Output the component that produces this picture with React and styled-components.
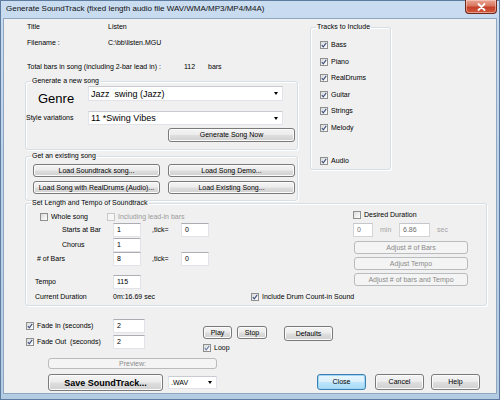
import React from "react";
import styled, { createGlobalStyle, css } from "styled-components";

const GlobalStyle = createGlobalStyle`
  html, body { margin: 0; padding: 0; background: #ffffff; }
  body { font-family: "Liberation Sans", Arial, sans-serif; }
  * { box-sizing: border-box; }
`;

const Window = styled.div`
  width: 500px;
  height: 400px;
  display: flex;
  flex-direction: column;
  background: linear-gradient(180deg, #c9dcf0 0%, #bcd2ea 40%, #b4cbe4 100%);
  border: 1px solid #5d7c9f;
  font-family: "Liberation Sans", Arial, sans-serif;
  color: #000;
`;

const TitleBar = styled.div`
  height: 17px;
  flex: none;
  display: flex;
  align-items: flex-start;
  justify-content: space-between;
  padding-left: 5px;
`;

const TitleText = styled.div`
  font-size: 8px;
  line-height: 15px;
  color: #111;
`;

const CloseBtn = styled.div`
  width: 32px;
  height: 14px;
  margin-right: 2px;
  margin-top: -1px;
  border: 1px solid #6e2a1f;
  border-top: none;
  border-radius: 0 0 4px 4px;
  background: linear-gradient(180deg, #e9a593 0%, #d9765f 45%, #c4412a 55%, #d35a3c 100%);
  display: flex;
  align-items: center;
  justify-content: center;
  box-shadow: inset 0 0 0 1px rgba(255, 220, 210, 0.5);
`;

const Client = styled.div`
  flex: 1;
  margin: 0 2px 5px 2px;
  background: #f0f0f0;
  border: 1px solid #8fa7c0;
  padding-left: 21px;
  display: flex;
  flex-direction: column;
  font-size: 7px;
  line-height: 8px;
`;

const TopArea = styled.div`
  display: flex;
  align-items: flex-start;
`;

const LeftCol = styled.div`
  width: 273px;
  flex: none;
  display: flex;
  flex-direction: column;
`;

const InfoRow = styled.div`
  display: flex;
  height: 12px;
  line-height: 12px;
  padding-left: 2px;
  margin-top: ${(p) => p.$mt || 0}px;
`;

const InfoLabel = styled.span`
  width: ${(p) => p.$w}px;
  flex: none;
`;

const Group = styled.fieldset`
  margin: ${(p) => p.$mt || 0}px 0 0 0;
  padding: ${(p) => p.$pt || 0}px 0 ${(p) => p.$pb || 0}px 0;
  border: 1px solid #d5dfe5;
  border-radius: 3px;
  box-shadow: inset 1px 1px 0 #fff, 1px 1px 0 #fff;
  min-width: 0;
  width: ${(p) => p.$w}px;
  flex: none;
`;

const Legend = styled.legend`
  font-size: 7px;
  line-height: 8px;
  padding: 0 1px;
  margin-left: 5px;
`;

const Row = styled.div`
  display: flex;
  align-items: ${(p) => p.$align || "center"};
  height: ${(p) => p.$h}px;
  margin-top: ${(p) => p.$mt || 0}px;
  margin-left: ${(p) => p.$ml || 0}px;
  gap: ${(p) => p.$gap || 0}px;
`;

const LabelCell = styled.span`
  width: ${(p) => p.$w}px;
  padding-left: ${(p) => p.$pl || 0}px;
  flex: none;
  white-space: nowrap;
  color: ${(p) => (p.$muted ? "#9a9a9a" : "#000")};
`;

const GenreLabel = styled.span`
  width: 62px;
  flex: none;
  padding-left: 12px;
  font-size: 13px;
  line-height: 15px;
  padding-top: 5px;
  align-self: flex-start;
`;

const ComboBox = styled.div`
  width: ${(p) => p.$w}px;
  height: ${(p) => p.$h}px;
  flex: none;
  background: #fff;
  border: 1px solid #e2e3ea;
  border-top-color: #c9cbd3;
  display: flex;
  align-items: center;
  justify-content: space-between;
  padding: 0 4px 0 2px;
  font-size: ${(p) => p.$fs || 9}px;
  white-space: pre;
`;

const Arrow = styled.span`
  width: 0;
  height: 0;
  border-left: 2.5px solid transparent;
  border-right: 2.5px solid transparent;
  border-top: 3px solid #000;
  flex: none;
`;

const buttonBase = css`
  flex: none;
  display: flex;
  align-items: center;
  justify-content: center;
  border-radius: 3px;
  white-space: nowrap;
  font-family: "Liberation Sans", Arial, sans-serif;
`;

const Button = styled.div`
  ${buttonBase};
  width: ${(p) => p.$w}px;
  height: ${(p) => p.$h || 13}px;
  margin-top: ${(p) => p.$mt || 0}px;
  margin-left: ${(p) => p.$ml || 0}px;
  font-size: ${(p) => p.$fs || 7}px;
  font-weight: ${(p) => (p.$bold ? 700 : 400)};
  ${(p) =>
    p.$disabled
      ? css`
          background: #f4f4f4;
          border: 1px solid #b8bcbf;
          color: #8a8a8a;
        `
      : p.$focused
      ? css`
          background: linear-gradient(180deg, #eaf6fd 0%, #d9f0fc 48%, #bee6fd 52%, #a7d9f5 100%);
          border: 1px solid #3c7fb1;
          box-shadow: inset 0 0 0 1px #9fd6f5;
          color: #000;
        `
      : css`
          background: linear-gradient(180deg, #f4f4f4 0%, #ececec 48%, #dedede 52%, #d0d0d0 100%);
          border: 1px solid #7a7a7a;
          box-shadow: inset 0 0 0 1px #fbfbfb;
          color: #000;
        `}
`;

const ButtonRow = styled.div`
  display: flex;
  gap: ${(p) => p.$gap || 0}px;
  margin-top: ${(p) => p.$mt || 0}px;
  margin-left: ${(p) => p.$ml || 0}px;
`;

const Input = styled.div`
  width: ${(p) => p.$w}px;
  height: ${(p) => p.$h || 14}px;
  flex: none;
  background: #fff;
  border: 1px solid ${(p) => (p.$disabled ? "#d2d4d8" : "#e1e3e8")};
  border-top-color: ${(p) => (p.$disabled ? "#c4c6cb" : "#abadb3")};
  padding: 2px 0 0 3px;
  font-size: 7px;
  line-height: 8px;
  color: ${(p) => (p.$disabled ? "#6d6d6d" : "#000")};
`;

const CheckWrap = styled.label`
  display: flex;
  align-items: center;
  gap: 3px;
  white-space: nowrap;
  flex: none;
  width: ${(p) => (p.$w ? `${p.$w}px` : "auto")};
  color: ${(p) => (p.$disabled ? "#9a9a9a" : "#000")};
  margin-left: ${(p) => p.$ml || 0}px;
`;

const Box = styled.span`
  width: 8px;
  height: 8px;
  flex: none;
  border: 1px solid ${(p) => (p.$disabled ? "#c8c8c8" : "#8e8f8f")};
  background: ${(p) =>
    p.$disabled ? "#f6f6f6" : "linear-gradient(135deg, #d9dadc 0%, #f1f1f2 60%, #ffffff 100%)"};
  display: flex;
  align-items: center;
  justify-content: center;
`;

const Check = ({ checked, disabled, children, w, ml, light }) => (
  <CheckWrap $disabled={disabled} $w={w} $ml={ml}>
    <Box $disabled={disabled}>
      {checked && (
        <svg width="6" height="6" viewBox="0 0 6 6">
          <polyline
            points="0.8,3.1 2.3,4.8 5.2,0.9"
            fill="none"
            stroke={light ? "#6f7f9f" : "#3d4f7c"}
            strokeWidth="1.1"
          />
        </svg>
      )}
    </Box>
    {children}
  </CheckWrap>
);

const TracksCol = styled.div`
  margin-left: 12px;
  margin-top: 4px;
  display: flex;
  flex-direction: column;
`;

const TrackRow = styled.div`
  height: 16.5px;
  display: flex;
  align-items: center;
  padding-left: 9px;
  margin-top: ${(p) => p.$mt || 0}px;
`;

const SplitRow = styled.div`
  display: flex;
  align-items: flex-start;
`;

const Column = styled.div`
  display: flex;
  flex-direction: column;
  width: ${(p) => (p.$w ? `${p.$w}px` : "auto")};
  flex: none;
  margin-top: ${(p) => p.$mt || 0}px;
  margin-left: ${(p) => p.$ml || 0}px;
`;

const Muted = styled.span`
  color: #a4a4a4;
  width: ${(p) => p.$w}px;
  padding-left: ${(p) => p.$pl || 0}px;
  flex: none;
`;

const Tick = styled.span`
  width: 40px;
  padding-left: 11px;
  flex: none;
`;

const Plain = styled.span`
  flex: none;
  width: ${(p) => (p.$w ? `${p.$w}px` : "auto")};
  padding-left: ${(p) => p.$pl || 0}px;
  white-space: nowrap;
`;

const tracks = ["Bass", "Piano", "RealDrums", "Guitar", "Strings", "Melody"];

export default function App() {
  return (
    <>
      <GlobalStyle />
      <Window>
        <TitleBar>
          <TitleText>Generate SoundTrack (fixed length audio file WAV/WMA/MP3/MP4/M4A)</TitleText>
          <CloseBtn>
            <svg width="9" height="8" viewBox="0 0 9 8">
              <path d="M1.5 1 L7.5 7 M7.5 1 L1.5 7" stroke="#fff" strokeWidth="1.8" strokeLinecap="round" />
            </svg>
          </CloseBtn>
        </TitleBar>
        <Client>
          <TopArea>
            <LeftCol>
              <InfoRow $mt={2}>
                <InfoLabel $w={81}>Title</InfoLabel>
                <span>Listen</span>
              </InfoRow>
              <InfoRow $mt={4}>
                <InfoLabel $w={81}>Filename :</InfoLabel>
                <span>C:\bb\listen.MGU</span>
              </InfoRow>
              <InfoRow $mt={12}>
                <InfoLabel $w={157}>Total bars in song (including 2-bar lead in) :</InfoLabel>
                <InfoLabel $w={24}>112</InfoLabel>
                <span>bars</span>
              </InfoRow>

              <Group $w={273} $mt={4} $pt={1} $pb={7}>
                <Legend>Generate a new song</Legend>
                <Row $h={15}>
                  <GenreLabel>Genre</GenreLabel>
                  <ComboBox $w={195} $h={15}>
                    <span>Jazz  swing (Jazz)</span>
                    <Arrow />
                  </ComboBox>
                </Row>
                <Row $h={14} $mt={10}>
                  <LabelCell $w={62}>Style variations</LabelCell>
                  <ComboBox $w={195} $h={14}>
                    <span>11 *Swing Vibes</span>
                    <Arrow />
                  </ComboBox>
                </Row>
                <Button $w={127} $h={14} $mt={3} $ml={142}>
                  Generate Song Now
                </Button>
              </Group>

              <Group $w={273} $mt={2} $pt={4} $pb={6}>
                <Legend>Get an existing song</Legend>
                <ButtonRow $gap={8} $ml={7}>
                  <Button $w={127}>Load Soundtrack song...</Button>
                  <Button $w={127}>Load Song Demo...</Button>
                </ButtonRow>
                <ButtonRow $gap={8} $ml={7} $mt={4}>
                  <Button $w={127}>Load Song with RealDrums (Audio)...</Button>
                  <Button $w={127}>Load Existing Song...</Button>
                </ButtonRow>
              </Group>
            </LeftCol>

            <TracksCol>
              <Group $w={81} $pt={5.75}>
                <Legend>Tracks to Include</Legend>
                {tracks.map((t) => (
                  <TrackRow key={t}>
                    <Check checked>{t}</Check>
                  </TrackRow>
                ))}
                <TrackRow $mt={17}>
                  <Check checked>Audio</Check>
                </TrackRow>
              </Group>
            </TracksCol>
          </TopArea>

          <Group $w={462} $mt={-2} $pt={3} $pb={3}>
            <Legend>Set Length and Tempo of Soundtrack</Legend>
            <SplitRow>
              <Column $w={327}>
                <Row $h={10} $mt={2} $ml={14}>
                  <Check w={67}>Whole song</Check>
                  <Check disabled>Including lead-in bars</Check>
                </Row>
                <Row $h={14} $mt={1}>
                  <LabelCell $w={87} $pl={36}>Starts at Bar</LabelCell>
                  <Input $w={28}>1</Input>
                  <Tick>,tick=</Tick>
                  <Input $w={28}>0</Input>
                </Row>
                <Row $h={14} $mt={1}>
                  <LabelCell $w={87} $pl={36}>Chorus</LabelCell>
                  <Input $w={28}>1</Input>
                </Row>
                <Row $h={14}>
                  <LabelCell $w={87} $pl={11}>
                    # of Bars
                  </LabelCell>
                  <Input $w={28}>8</Input>
                  <Tick>,tick=</Tick>
                  <Input $w={28}>0</Input>
                </Row>
                <Row $h={14} $mt={9}>
                  <LabelCell $w={87} $pl={9}>
                    Tempo
                  </LabelCell>
                  <Input $w={28}>115</Input>
                </Row>
              </Column>
              <Column>
                <Row $h={10}>
                  <Check>Desired Duration</Check>
                </Row>
                <Row $h={14} $mt={3}>
                  <Input $w={20} $disabled>
                    0
                  </Input>
                  <Muted $w={26} $pl={7}>
                    min
                  </Muted>
                  <Input $w={31} $disabled>
                    6.86
                  </Input>
                  <Muted $pl={7}>sec</Muted>
                </Row>
                <Button $w={114} $mt={4} $ml={1} $disabled>
                  Adjust # of Bars
                </Button>
                <Button $w={114} $mt={3} $ml={1} $disabled>
                  Adjust Tempo
                </Button>
                <Button $w={114} $mt={3} $ml={1} $disabled>
                  Adjust # of bars and Tempo
                </Button>
              </Column>
            </SplitRow>
            <Row $h={10} $mt={3}>
              <LabelCell $w={87} $pl={9}>
                Current Duration
              </LabelCell>
              <Plain $w={138}>0m:16.69 sec</Plain>
              <Check checked>Include Drum Count-in Sound</Check>
            </Row>
          </Group>

          <SplitRow>
            <Column $w={120} $mt={13} $ml={1}>
              <Row $h={14}>
                <Check checked w={87}>
                  Fade In (seconds)
                </Check>
                <Input $w={32}>2</Input>
              </Row>
              <Row $h={14} $mt={2}>
                <Check checked w={87}>
                  Fade Out&nbsp; (seconds)
                </Check>
                <Input $w={32}>2</Input>
              </Row>
            </Column>
            <Column $mt={20} $ml={57}>
              <ButtonRow $gap={5}>
                <Button $w={29}>Play</Button>
                <Button $w={30}>Stop</Button>
              </ButtonRow>
              <Row $h={8} $mt={5}>
                <Check checked light>
                  Loop
                </Check>
              </Row>
            </Column>
            <Button $w={49} $h={15} $mt={20} $ml={17}>
              Defaults
            </Button>
          </SplitRow>

          <SplitRow>
            <Column $w={192} $mt={6} $ml={23}>
              <Button $w={169} $h={11} $disabled>
                Preview:
              </Button>
              <Row $h={17} $mt={5} $gap={5}>
                <Button $w={115} $h={17} $fs={9} $bold>
                  Save SoundTrack...
                </Button>
                <ComboBox $w={49} $h={13} $fs={7}>
                  <span>.WAV</span>
                  <Arrow />
                </ComboBox>
              </Row>
            </Column>
            <ButtonRow $gap={9} $mt={22} $ml={77}>
              <Button $w={49} $h={16} $focused>
                Close
              </Button>
              <Button $w={49} $h={16}>
                Cancel
              </Button>
              <Button $w={49} $h={16} $ml={-2}>
                Help
              </Button>
            </ButtonRow>
          </SplitRow>
        </Client>
      </Window>
    </>
  );
}
